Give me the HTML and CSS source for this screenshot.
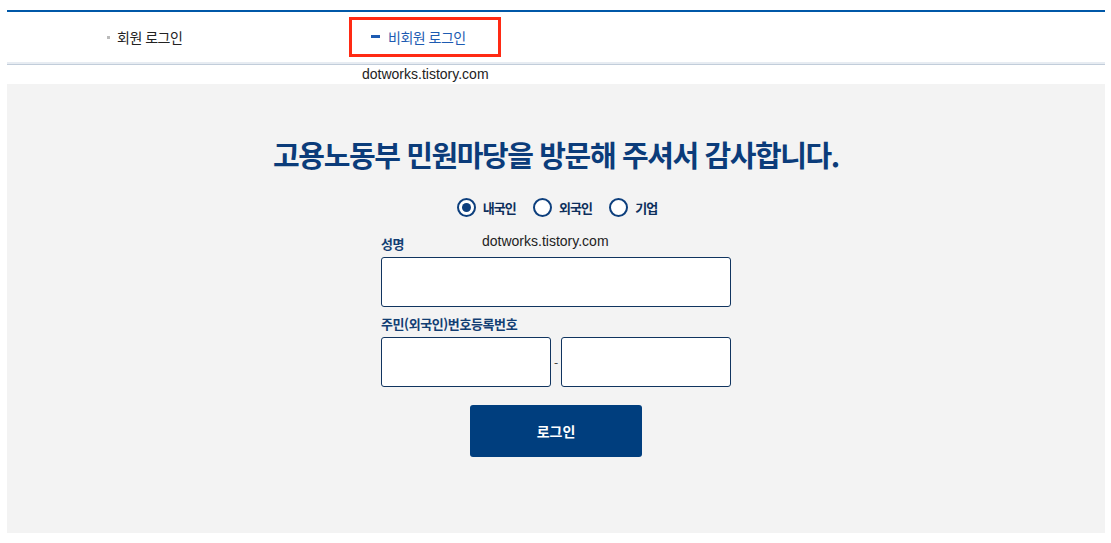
FILE: index.html
```html
<!DOCTYPE html>
<html lang="ko">
<head>
    <meta charset="UTF-8">
    <meta name="viewport" content="width=device-width, initial-scale=1.0">
    <title>고용노동부 민원마당 - 로그인</title>
    <link rel="stylesheet" href="styles.css">
</head>
<body>
    <div class="page">
        <div class="login-tabs">
            <a class="tab-item" href="#">회원 로그인</a>
            <a class="tab-item tab-active" href="#">비회원 로그인</a>
        </div>
        <div class="tab-divider"></div>
        <div class="site-mark">dotworks.tistory.com</div>

        <div class="login-box">
            <h1 class="login-title">고용노동부 민원마당을 방문해 주셔서 감사합니다.</h1>

            <div class="user-type">
                <label class="radio-item">
                    <input type="radio" name="userType" checked>
                    <span class="radio-mark"></span>
                    <span>내국인</span>
                </label>
                <label class="radio-item">
                    <input type="radio" name="userType">
                    <span class="radio-mark"></span>
                    <span>외국인</span>
                </label>
                <label class="radio-item">
                    <input type="radio" name="userType">
                    <span class="radio-mark"></span>
                    <span>기업</span>
                </label>
            </div>

            <form class="login-form" onsubmit="return false;">
                <div class="field-label">
                    성명
                    <span class="field-mark">dotworks.tistory.com</span>
                </div>
                <input class="text-input" type="text">

                <div class="field-label">주민(외국인)번호등록번호</div>
                <div class="jumin-row">
                    <input class="text-input" type="text" maxlength="6">
                    <span class="jumin-dash">-</span>
                    <input class="text-input" type="password" maxlength="7">
                </div>

                <button class="login-button" type="submit">로그인</button>
            </form>
        </div>
    </div>
</body>
</html>
```

FILE: styles.css
```css
* {
    margin: 0;
    padding: 0;
    box-sizing: border-box;
}

body {
    font-family: 'Noto Sans CJK KR', 'Noto Sans', sans-serif;
    background: #fff;
    color: #222;
}

.page {
    width: 1098px;
    margin: 0 0 0 7px;
    padding-top: 10px;
}

/* 로그인 탭 */
.login-tabs {
    display: flex;
    align-items: center;
    height: 52px;
    border-top: 2px solid #0058a8;
    padding-left: 100px;
}

.tab-item {
    display: flex;
    align-items: center;
    font-size: 14px;
    color: #222;
    text-decoration: none;
    letter-spacing: -0.5px;
}

.tab-item:first-child {
    width: 242px;
}

.tab-item:first-child:before {
    content: "";
    width: 3px;
    height: 3px;
    background: #bbb;
    margin-right: 7px;
}

.tab-active {
    width: 152px;
    height: 40px;
    margin-top: -1px;
    border: 3px solid #ff2a14;
    color: #1d5bb2;
    padding-left: 19px;
}

.tab-active:before {
    content: "";
    width: 9px;
    height: 3px;
    background: #1d5bb2;
    margin-right: 8px;
}

.tab-divider {
    height: 3px;
    background: #e7ecf2;
    border-bottom: 1px solid #c2cdda;
}

.site-mark {
    height: 19px;
    padding-left: 355px;
    font-family: 'Liberation Sans', Arial, sans-serif;
    font-size: 14px;
    line-height: 19px;
    color: #222;
}

/* 로그인 박스 */
.login-box {
    background: #f3f3f3;
    height: 449px;
    padding-top: 53px;
    display: flex;
    flex-direction: column;
    align-items: center;
}

.login-title {
    font-size: 29px;
    line-height: 34px;
    font-weight: 700;
    letter-spacing: -1.4px;
    color: #0b3c7a;
}

.user-type {
    display: flex;
    align-items: center;
    gap: 17px;
    margin-top: 26px;
    height: 20px;
    padding-left: 2px;
}

.radio-item {
    display: flex;
    align-items: center;
    gap: 7px;
    font-size: 13px;
    font-weight: 700;
    color: #0d2f5c;
    letter-spacing: -0.9px;
    cursor: pointer;
}

.radio-item input {
    display: none;
}

.radio-mark {
    width: 19px;
    height: 19px;
    border: 2px solid #0d3f7d;
    border-radius: 50%;
    background: #fff;
    display: flex;
    align-items: center;
    justify-content: center;
}

.radio-item input:checked + .radio-mark:after {
    content: "";
    width: 9px;
    height: 9px;
    border-radius: 50%;
    background: #0d3f7d;
}

.login-form {
    width: 350px;
    margin-top: 18px;
}

.field-label {
    position: relative;
    height: 18px;
    font-size: 13px;
    line-height: 18px;
    font-weight: 700;
    color: #123e73;
    letter-spacing: -0.4px;
    margin-bottom: 4px;
}

.field-mark {
    position: absolute;
    left: 101px;
    top: -3px;
    font-family: 'Liberation Sans', Arial, sans-serif;
    font-size: 14px;
    font-weight: 400;
    letter-spacing: 0;
    color: #222;
}

.text-input {
    display: block;
    width: 100%;
    height: 50px;
    border: 1px solid #10345f;
    border-radius: 3px;
    background: #fff;
    padding: 0 10px;
    font-size: 14px;
    margin-bottom: 8px;
}

.jumin-row {
    display: flex;
    align-items: center;
}

.jumin-row .text-input {
    width: 170px;
    margin-bottom: 0;
}

.jumin-dash {
    width: 10px;
    text-align: center;
    font-size: 12px;
    color: #333;
}

.login-button {
    display: block;
    width: 172px;
    height: 52px;
    margin: 18px auto 0;
    border: none;
    border-radius: 3px;
    background: #003e7e;
    color: #fff;
    font-family: inherit;
    font-size: 14px;
    font-weight: 700;
    cursor: pointer;
}
```
